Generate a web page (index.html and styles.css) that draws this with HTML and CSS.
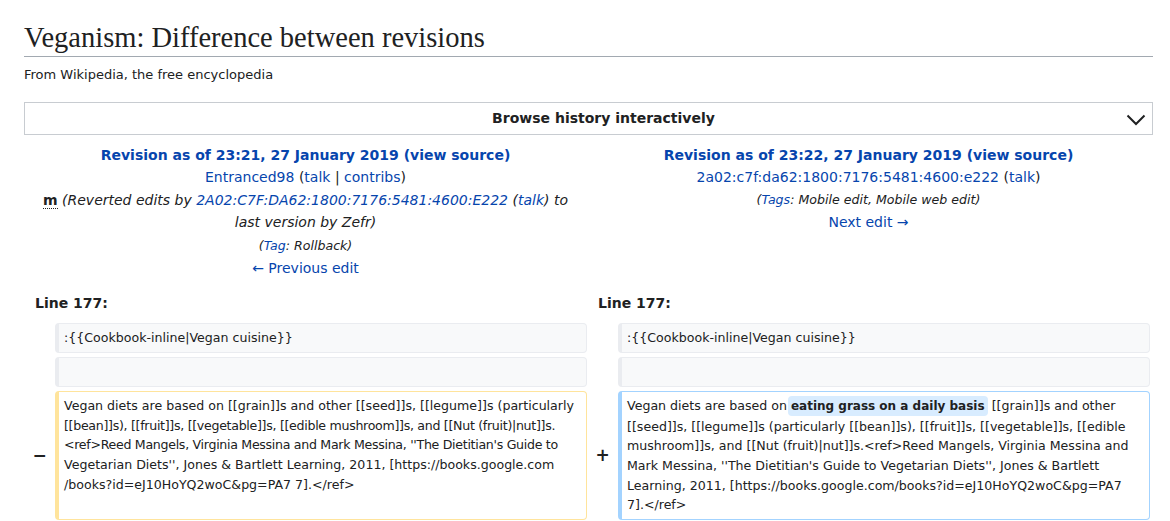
FILE: index.html
```html
<!DOCTYPE html>
<html lang="en">
<head>
<meta charset="utf-8">
<title>Veganism: Difference between revisions</title>
<link rel="stylesheet" href="styles.css">
</head>
<body>
<div class="page">
  <h1 class="title">Veganism: Difference between revisions</h1>
  <div class="tagline">From Wikipedia, the free encyclopedia</div>

  <div class="browse">
    <span class="browse-label">Browse history interactively</span>
    <svg class="chevron" width="20" height="12" viewBox="0 0 20 12"><path d="M1.5 1.5 L10 10 L18.5 1.5" fill="none" stroke="#202122" stroke-width="2"/></svg>
  </div>

  <div class="diff">
    <div class="rev rev-old">
      <div class="rev-title"><a href="#">Revision as of 23:21, 27 January 2019</a> <a href="#">(view source)</a></div>
      <div class="rev-user"><a href="#">Entranced98</a> <span class="tool">(<a href="#">talk</a> | <a href="#">contribs</a>)</span></div>
      <div class="rev-comment"><abbr class="minor">m</abbr> <span class="comment">(Reverted edits by <a href="#">2A02:C7F:DA62:1800:7176:5481:4600:E222</a> (<a href="#">talk</a>) to last version by Zefr)</span></div>
      <div class="rev-tags">(<a href="#">Tag</a>: Rollback)</div>
      <div class="rev-nav"><a href="#">← Previous edit</a></div>
    </div>
    <div class="rev rev-new">
      <div class="rev-title"><a href="#">Revision as of 23:22, 27 January 2019</a> <a href="#">(view source)</a></div>
      <div class="rev-user"><a href="#">2a02:c7f:da62:1800:7176:5481:4600:e222</a> <span class="tool">(<a href="#">talk</a>)</span></div>
      <div class="rev-tags">(<a href="#">Tags</a>: Mobile edit, Mobile web edit)</div>
      <div class="rev-nav"><a href="#">Next edit →</a></div>
    </div>

    <div class="lineno">Line 177:</div>
    <div class="lineno">Line 177:</div>

    <div class="marker"></div>
    <div class="cell context">:{{Cookbook-inline|Vegan cuisine}}</div>
    <div class="marker"></div>
    <div class="cell context">:{{Cookbook-inline|Vegan cuisine}}</div>

    <div class="marker"></div>
    <div class="cell context"><br></div>
    <div class="marker"></div>
    <div class="cell context"><br></div>

    <div class="marker">−</div>
    <div class="cell deleted">Vegan diets are based on [[grain]]s and other [[seed]]s, [[legume]]s (particularly<br><span class="tight">[[bean]]s), [[fruit]]s, [[vegetable]]s, [[edible mushroom]]s, and [[Nut (fruit)|nut]]s.</span><br><span class="tight">&lt;ref&gt;Reed Mangels, Virginia Messina and Mark Messina, ''The Dietitian's Guide to</span><br>Vegetarian Diets'', Jones &amp; Bartlett Learning, 2011, [https://books.google.com<br>/books?id=eJ10HoYQ2woC&amp;pg=PA7 7].&lt;/ref&gt;</div>
    <div class="marker">+</div>
    <div class="cell added">Vegan diets are based on <ins class="change">eating grass on a daily basis</ins> [[grain]]s and other<br>[[seed]]s, [[legume]]s (particularly [[bean]]s), [[fruit]]s, [[vegetable]]s, [[edible<br>mushroom]]s, and [[Nut (fruit)|nut]]s.&lt;ref&gt;Reed Mangels, Virginia Messina and<br>Mark Messina, ''The Dietitian's Guide to Vegetarian Diets'', Jones &amp; Bartlett<br>Learning, 2011, [https://books.google.com/books?id=eJ10HoYQ2woC&amp;pg=PA7<br>7].&lt;/ref&gt;</div>
  </div>
</div>
</body>
</html>
```
FILE: styles.css
```css
* { box-sizing: border-box; }
html, body { margin: 0; padding: 0; background: #fff; }
body {
  font-family: "DejaVu Sans", sans-serif;
  color: #202122;
  font-size: 14px;
}
a { color: #0645ad; text-decoration: none; }
.page { padding: 0 17px 0 24px; }

.title {
  font-family: "Liberation Serif", serif;
  font-weight: normal;
  font-size: 28.5px;
  line-height: 1.3;
  margin: 0;
  padding-top: 19px;
  border-bottom: 1px solid #a2a9b1;
}
.tagline {
  font-size: 13px;
  margin-top: 8px;
  line-height: 1.6;
}

.browse {
  margin-top: 16px;
  border: 1px solid #c8ccd1;
  height: 33px;
  display: flex;
  align-items: center;
  justify-content: center;
  padding-left: 30px;
  position: relative;
}
.browse-label { font-weight: bold; font-size: 14px; }
.chevron { position: absolute; right: 6px; top: 11px; }

.diff {
  display: grid;
  grid-template-columns: 31px 532px 31px 532px;
  row-gap: 4px;
  margin-top: 9px;
}
.rev {
  text-align: center;
  line-height: 22.4px;
  padding: 0 8px;
}
.rev-old { grid-column: 1 / 3; }
.rev-new { grid-column: 3 / 5; }
.rev-title { font-weight: bold; }
.rev-comment { margin-bottom: 2px; }
.rev-comment .comment { font-style: italic; }
.minor {
  font-weight: bold;
  text-decoration: none;
  border-bottom: 1px dotted #202122;
  line-height: 1;
}
.rev-tags {
  font-size: 12.6px;
  font-style: italic;
  line-height: 22px;
}
.rev-nav { line-height: 22px; }

.lineno {
  grid-column: span 2;
  font-weight: bold;
  padding: 9px 11px 0;
  line-height: 22px;
  margin-bottom: 5px;
}

.marker {
  display: flex;
  align-items: center;
  justify-content: center;
  font-weight: bold;
  font-size: 17px;
}
.cell {
  font-size: 12.6px;
  line-height: 19.7px;
  padding: 4px 5px 4px 5px;
  border-style: solid;
  border-width: 1px 1px 1px 4px;
  border-radius: 4px;
  white-space: pre-wrap;
  word-wrap: break-word;
}
.tight { letter-spacing: -0.3px; }
.context { background: #f8f9fa; border-color: #eaecf0; }
.deleted { border-color: #ffe49c; }
.added { border-color: #a3d3ff; }
.change {
  text-decoration: none;
  font-weight: bold;
  font-size: 12px;
  background: #d8ecff;
  border-radius: 4px;
  padding: 3px 3px;
  margin-left: -3px;
}
```
